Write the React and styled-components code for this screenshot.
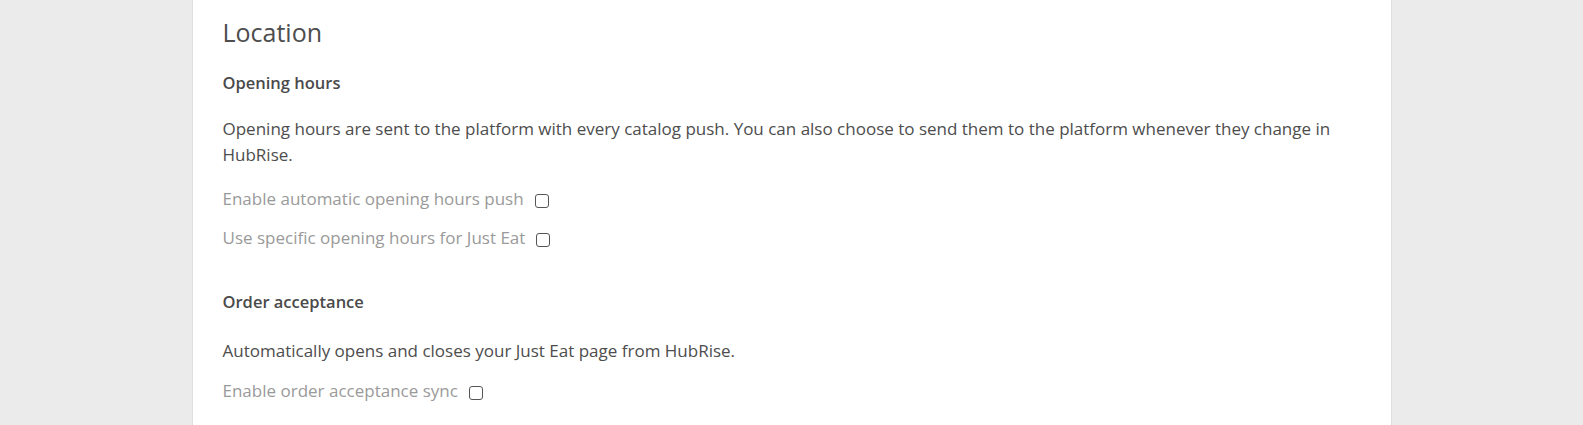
import React from "react"
import styled, { createGlobalStyle } from "styled-components"

const GlobalStyle = createGlobalStyle`
  body {
    margin: 0;
    background: #ebebeb;
    font-family: "Open Sans", "Noto Sans", sans-serif;
    color: #4d4d4d;
  }
`

const Panel = styled.main`
  width: 1200px;
  box-sizing: border-box;
  margin: 0 auto;
  min-height: 425px;
  background: #fff;
  border-left: 1px solid #dedede;
  border-right: 1px solid #dedede;
  padding: 17px 30px 0;
`

const Title = styled.h1`
  margin: 0 0 24px;
  font-size: 25px;
  line-height: 30px;
  font-weight: 500;
  color: #4d4d4d;
`

const Section = styled.section`
  margin-bottom: 40px;
`

const SectionTitle = styled.h2`
  margin: 0 0 ${props => props.$gap || 21}px;
  font-size: 16.5px;
  line-height: 24px;
  font-weight: 600;
  color: #4a4a4a;
`

const Text = styled.p`
  margin: 0 0 ${props => props.$gap || 19}px;
  font-size: 17px;
  line-height: 26px;
`

const Options = styled.div`
  display: flex;
  flex-direction: column;
  gap: 15px;
`

const Option = styled.label`
  display: flex;
  align-items: center;
  gap: 11px;
  font-size: 17px;
  line-height: 24px;
  color: #9a9a9a;
`

const Box = styled.input.attrs({ type: "checkbox" })`
  appearance: none;
  margin: 3px 0 0;
  width: 14px;
  height: 14px;
  box-sizing: border-box;
  border: 1.5px solid #555;
  border-radius: 3px;
  background: #fff;
`

const Checkbox = ({ children }) => (
  <Option>
    {children}
    <Box />
  </Option>
)

export default function App() {
  return (
    <>
      <GlobalStyle />
      <Panel>
        <Title>Location</Title>
        <Section>
          <SectionTitle>Opening hours</SectionTitle>
          <Text>
            Opening hours are sent to the platform with every catalog push. You can also choose to
            send them to the platform whenever they change in HubRise.
          </Text>
          <Options>
            <Checkbox>Enable automatic opening hours push</Checkbox>
            <Checkbox>Use specific opening hours for Just Eat</Checkbox>
          </Options>
        </Section>
        <Section>
          <SectionTitle $gap={24}>Order acceptance</SectionTitle>
          <Text $gap={15}>Automatically opens and closes your Just Eat page from HubRise.</Text>
          <Options>
            <Checkbox>Enable order acceptance sync</Checkbox>
          </Options>
        </Section>
      </Panel>
    </>
  )
}
